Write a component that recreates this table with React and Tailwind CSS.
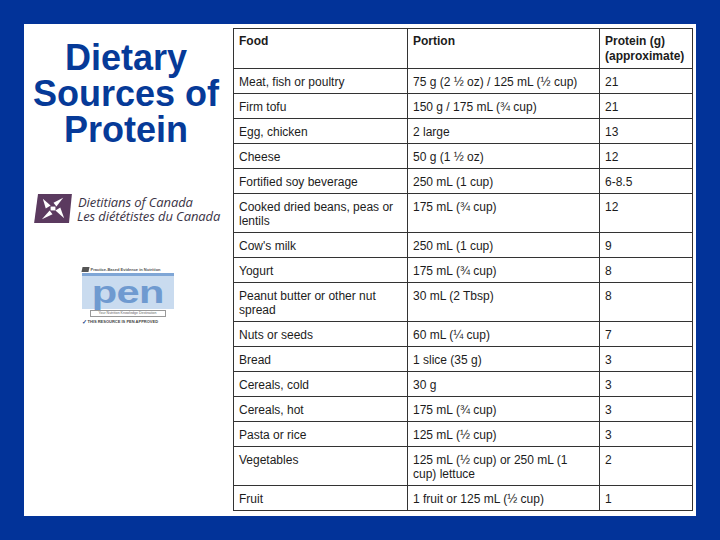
import React from "react";

const rows = [
  ["Meat, fish or poultry", "75 g (2 ½ oz) / 125 mL (½ cup)", "21"],
  ["Firm tofu", "150 g / 175 mL (¾ cup)", "21"],
  ["Egg, chicken", "2 large", "13"],
  ["Cheese", "50 g (1 ½ oz)", "12"],
  ["Fortified soy beverage", "250 mL (1 cup)", "6-8.5"],
  [["Cooked dried beans, peas or", "lentils"], "175 mL (¾ cup)", "12"],
  ["Cow's milk", "250 mL (1 cup)", "9"],
  ["Yogurt", "175 mL (¾ cup)", "8"],
  [["Peanut butter or other nut", "spread"], "30 mL (2 Tbsp)", "8"],
  ["Nuts or seeds", "60 mL (¼ cup)", "7"],
  ["Bread", "1 slice (35 g)", "3"],
  ["Cereals, cold", "30 g", "3"],
  ["Cereals, hot", "175 mL (¾ cup)", "3"],
  ["Pasta or rice", "125 mL (½ cup)", "3"],
  ["Vegetables", ["125 mL (½ cup) or 250 mL (1", "cup) lettuce"], "2"],
  ["Fruit", "1 fruit or 125 mL (½ cup)", "1"],
];

const Lines = ({ v }) =>
  Array.isArray(v) ? (
    <>
      {v[0]}
      <br />
      {v[1]}
    </>
  ) : (
    v
  );

const DietitiansLogo = () => (
  <div className="flex items-center gap-[4px]">
    <svg width="39" height="31" viewBox="0 0 40 32">
      <polygon points="4,1 39,1 36,31 0,31" fill="#5b3a5f" />
      {/* white pinwheel */}
      <path d="M9 6 L17 13 L12 16 Z" fill="#fff" />
      <path d="M30 5 L23 14 L20 10 Z" fill="#fff" />
      <path d="M31 26 L22 18 L27 15 Z" fill="#fff" />
      <path d="M8 27 L16 18 L19 22 Z" fill="#fff" />
      <rect x="17" y="14" width="5" height="4" fill="#fff" />
    </svg>
    <div
      className="italic text-[13px] leading-[14px] text-[#3b3446] tracking-[-0.1px]"
      style={{ fontFamily: '"Open Sans", "Liberation Sans", sans-serif' }}
    >
      <div className="pl-[1px]">Dietitians of Canada</div>
      <div>Les diététistes du Canada</div>
    </div>
  </div>
);

const PenLogo = () => (
  <div className="w-[92px] flex flex-col items-stretch">
    <div className="flex items-center gap-[2px] h-[7px]">
      <div className="w-[7px] h-[5px] bg-[#555] -skew-x-12 shrink-0" />
      <div className="text-[4px] leading-[6px] text-[#555] font-bold whitespace-nowrap">
        Practice-Based Evidence in Nutrition
      </div>
    </div>
    <div className="h-[36px] bg-[#c9dbef] flex items-center justify-center border-t-[3px] border-[#7fa6d6]">
      <span className="text-[32px] leading-[33px] font-bold text-[#6f9ad0] tracking-[-0.5px] scale-x-130">
        pen
      </span>
    </div>
    <div className="mx-[8px] mt-[1px] h-[7px] border border-[#999] text-[3.5px] leading-[5px] text-[#666] text-center whitespace-nowrap">
      Your Nutrition Knowledge Destination
    </div>
    <div className="mt-[2px] flex items-center gap-[1px] text-[4px] leading-[6px] text-[#444] font-bold whitespace-nowrap">
      <span className="text-[6px] leading-[6px] text-[#2a4a8a]">✓</span>
      THIS RESOURCE IS PEN APPROVED
    </div>
  </div>
);

const App = () => {
  return (
    <div
      className="w-[720px] h-[540px] bg-[#023399] p-6"
      style={{ fontFamily: '"Liberation Sans", Arial, sans-serif' }}
    >
      <div className="w-full h-full bg-white flex">
        {/* LEFT COLUMN */}
        <div className="w-[209px] flex flex-col items-center pt-4">
          <h1 className="text-[36px] leading-[36px] font-bold text-[#063a98] text-center pr-[5px]">
            Dietary
            <br />
            Sources of
            <br />
            Protein
          </h1>
          <div className="mt-[45px] self-start pl-[10px]">
            <DietitiansLogo />
          </div>
          <div className="mt-[42px] pr-[2px]">
            <PenLogo />
          </div>
        </div>

        {/* TABLE */}
        <div className="pt-1">
          <table className="border-collapse table-fixed w-[459px] text-[12px] text-[#1c1c1c] border border-[#555]">
            <colgroup>
              <col className="w-[174px]" />
              <col className="w-[192px]" />
              <col className="w-[93px]" />
            </colgroup>
            <thead>
              <tr>
                {["Food", "Portion", ["Protein (g)", "(approximate)"]].map(
                  (h, i) => (
                    <th
                      key={i}
                      className="border border-[#333] text-left align-top font-bold pl-[5px] pr-1 pt-[5px] pb-[4px] leading-[15px] h-[40px]"
                    >
                      <Lines v={h} />
                    </th>
                  )
                )}
              </tr>
            </thead>
            <tbody>
              {rows.map((r, i) => (
                <tr key={i}>
                  {r.map((c, j) => (
                    <td
                      key={j}
                      className="border border-[#333] align-top pl-[5px] pr-1 pt-[6px] pb-[4px] leading-[14px] whitespace-nowrap"
                    >
                      <Lines v={c} />
                    </td>
                  ))}
                </tr>
              ))}
            </tbody>
          </table>
        </div>
      </div>
    </div>
  );
};

export default App;
